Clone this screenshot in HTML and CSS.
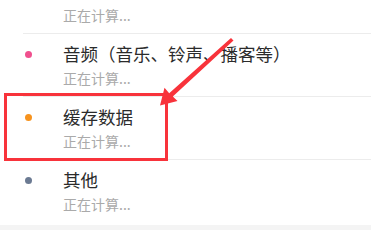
FILE: index.html
```html
<!DOCTYPE html>
<html lang="zh-CN">
  <head>
    <meta charset="UTF-8" />
    <meta name="viewport" content="width=device-width, initial-scale=1.0" />
    <title>存储空间</title>
    <link rel="stylesheet" href="styles.css">
  </head>
  <body>
    <div class="storage">
      <ul class="list">
        <li class="item">
          <span class="dot dot-image"></span>
          <div class="info">
            <div class="name">图片和视频</div>
            <div class="size">正在计算...</div>
          </div>
        </li>
        <li class="item">
          <span class="dot dot-audio"></span>
          <div class="info">
            <div class="name">音频（音乐、铃声、播客等）</div>
            <div class="size">正在计算...</div>
          </div>
        </li>
        <li class="item">
          <span class="dot dot-cache"></span>
          <div class="info">
            <div class="name">缓存数据</div>
            <div class="size">正在计算...</div>
          </div>
        </li>
        <li class="item">
          <span class="dot dot-other"></span>
          <div class="info">
            <div class="name">其他</div>
            <div class="size">正在计算...</div>
          </div>
        </li>
      </ul>
      <div class="footer"></div>

      <!-- annotation -->
      <div class="highlight"></div>
      <svg class="arrow" width="371" height="230" viewBox="0 0 371 230">
        <polygon points="231,38 233.5,40.5 172.8,96.6 177.5,101 160,105.5 164.5,87.8 169.2,93.2" fill="#f8333b" />
      </svg>
    </div>
  </body>
</html>
```

FILE: styles.css
```css
body {
  margin: 0;
  padding: 0;
  background-color: #fff;
  font-family: "Noto Sans CJK SC", "Noto Sans", sans-serif;
}

.storage {
  position: relative;
  width: 371px;
  height: 230px;
  overflow: hidden;
}

.list {
  list-style: none;
  margin: -29px 0 0 0;
  padding: 0;
}

.item {
  display: flex;
  align-items: flex-start;
  margin-left: 23px;
  padding: 9px 0 9px 2px;
  border-bottom: 1px solid #ececec;
  gap: 31px;
}

.item:last-child {
  border-bottom: none;
  padding-bottom: 12px;
}

.dot {
  flex: none;
  width: 7px;
  height: 7px;
  border-radius: 50%;
  margin-top: 8px;
}

.dot-image {
  background-color: #f6c343;
}

.dot-audio {
  background-color: #f0508e;
}

.dot-cache {
  background-color: #f7931e;
}

.dot-other {
  background-color: #6b7a92;
}

.name {
  font-size: 17.5px;
  line-height: 22px;
  color: #2b2b2b;
}

.size {
  margin-top: 4px;
  font-size: 14px;
  line-height: 18px;
  color: #aaa;
}

.footer {
  height: 20px;
  background-color: #f4f4f4;
}

.highlight {
  position: absolute;
  left: 4px;
  top: 93px;
  width: 164px;
  height: 68px;
  box-sizing: border-box;
  border: 3px solid #f8333b;
}

.arrow {
  position: absolute;
  left: 0;
  top: 0;
}
```
